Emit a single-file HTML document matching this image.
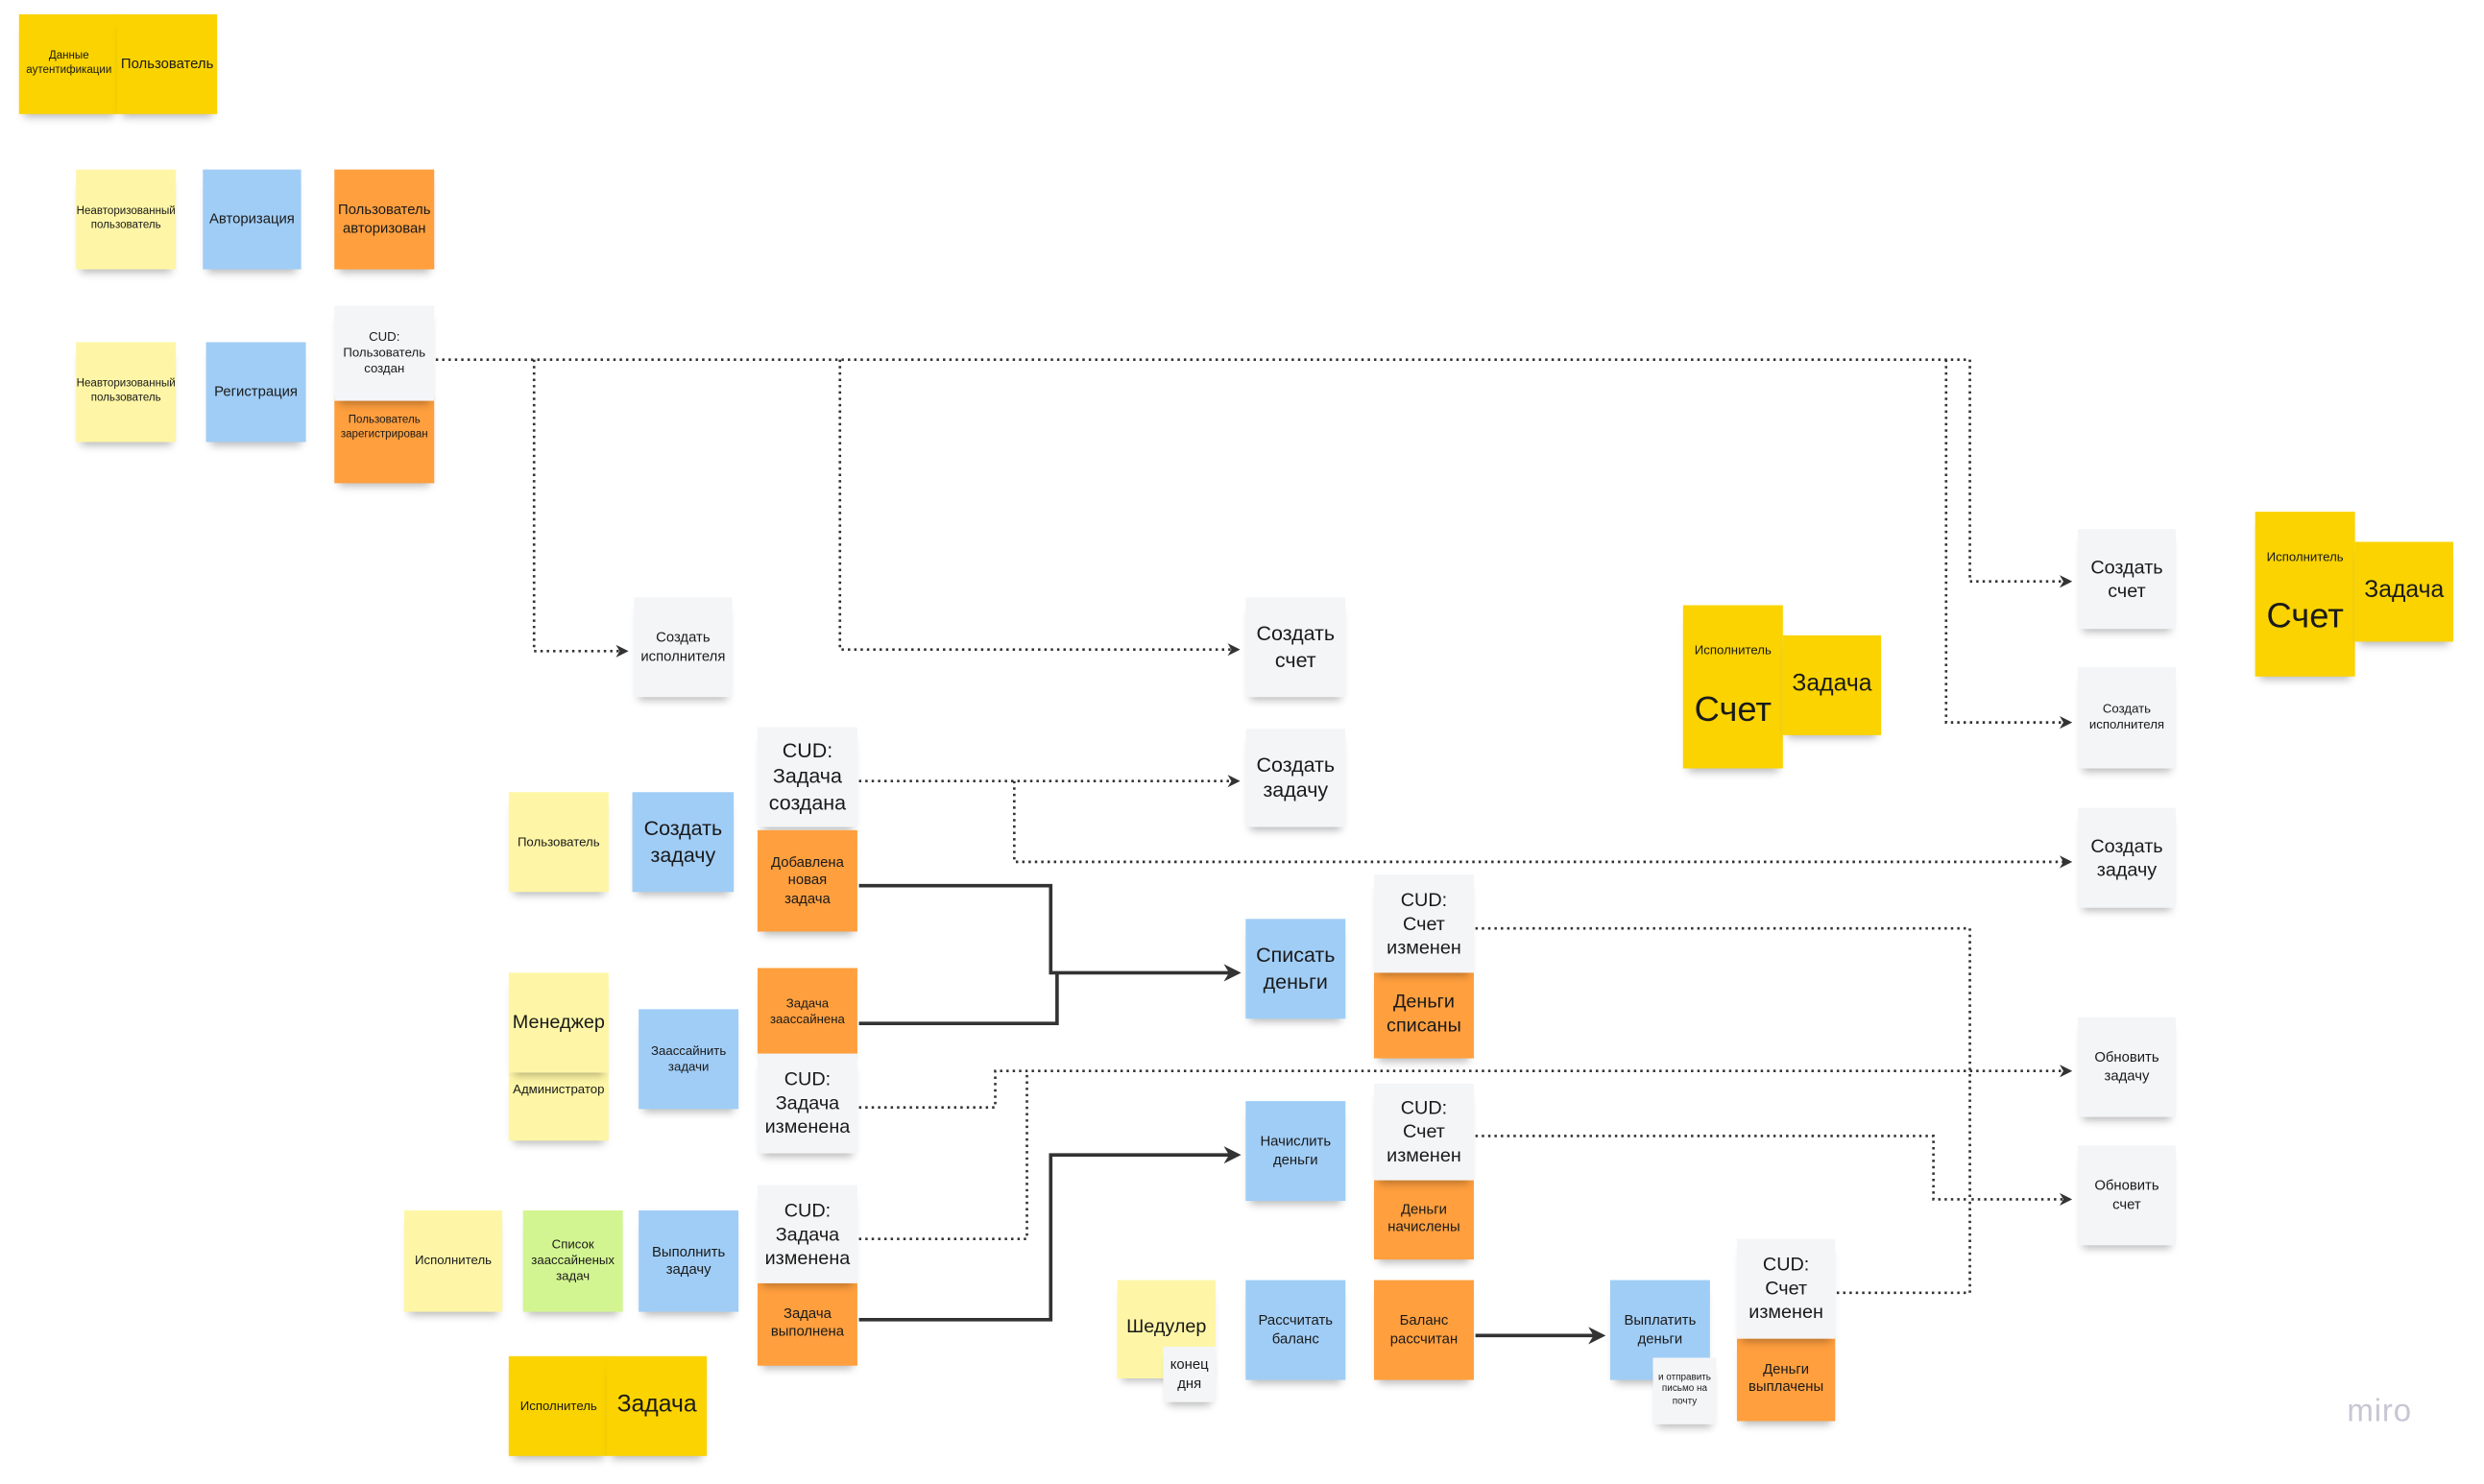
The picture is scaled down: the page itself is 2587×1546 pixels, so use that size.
<!DOCTYPE html>
<html><head><meta charset="utf-8">
<style>
html,body{margin:0;padding:0;background:#fff;overflow:hidden}
#w{position:absolute;left:0;top:0;width:1560px;height:933px;transform:scale(1.6505);transform-origin:0 0}
.s{position:absolute;display:flex;align-items:center;justify-content:center;text-align:center;
font-family:"Liberation Sans Narrow","Liberation Sans","DejaVu Sans",sans-serif;color:#1a1a1a;line-height:1.25;
box-shadow:0 5px 5px -3px rgba(0,0,0,.28);box-sizing:border-box;padding:2px 5px}
.y{background:#fad300}.ly{background:#fef6a6}.b{background:#a0cdf6}.o{background:#ff9f3e}.w{background:#f4f5f7}.g{background:#d3f591}
.f7{font-size:7px}.f8{font-size:8px}.f9{font-size:9px}.f12{font-size:12px}.f13{font-size:13px}.f15{font-size:15px}.f22{font-size:22px}
svg{position:absolute;left:0;top:0}
</style></head><body><div id="w">
<svg width="1560" height="933" viewBox="0 0 1560 933">
<defs><marker id="a" viewBox="0 0 10 10" refX="8" refY="5" markerWidth="5" markerHeight="5" orient="auto"><path d="M0 0 L10 5 L0 10 L3 5Z" fill="#333"/></marker></defs>
<g fill="none" stroke="#333" stroke-width="1.6" stroke-dasharray="1.5 2.5">
<path d="M275 227 H1243 V367 H1306" marker-end="url(#a)"/>
<path d="M337 227 V411 H395" marker-end="url(#a)"/>
<path d="M530 227 V410 H781" marker-end="url(#a)"/>
<path d="M1228 227 V456 H1306" marker-end="url(#a)"/>
<path d="M542 493 H781" marker-end="url(#a)"/>
<path d="M640 493 V544 H1306" marker-end="url(#a)"/>
<path d="M931 586 H1243 V757 H1306" marker-end="url(#a)"/>
<path d="M931 717 H1220 V757 H1243"/>
<path d="M1159 816 H1243 V757"/>
<path d="M542 699 H628 V676 H1306" marker-end="url(#a)"/>
<path d="M542 782 H648 V676"/>
</g>
<g fill="none" stroke="#333" stroke-width="2.2">
<path d="M542 559 H663 V614 H781" marker-end="url(#a)"/>
<path d="M542 646 H667 V614"/>
<path d="M542 833 H663 V729 H781" marker-end="url(#a)"/>
<path d="M931 843 H1011" marker-end="url(#a)"/>
</g>
</svg>

<div class="s y f7" style="left:12px;top:9px;width:63px;height:63px">Данные аутентификации</div>
<div class="s y f9" style="left:74px;top:9px;width:63px;height:63px">Пользователь</div>

<div class="s ly f7" style="left:48px;top:107px;width:63px;height:63px">Неавторизованный пользователь</div>
<div class="s b f9" style="left:128px;top:107px;width:62px;height:63px">Авторизация</div>
<div class="s o f9" style="left:211px;top:107px;width:63px;height:63px">Пользователь авторизован</div>

<div class="s ly f7" style="left:48px;top:216px;width:63px;height:63px">Неавторизованный пользователь</div>
<div class="s b f9" style="left:130px;top:216px;width:63px;height:63px">Регистрация</div>
<div class="s o f7" style="left:211px;top:250px;width:63px;height:55px;align-items:flex-start;padding-top:12px">Пользователь зарегистрирован</div>
<div class="s w f8" style="left:211px;top:193px;width:63px;height:60px">CUD: Пользователь создан</div>

<div class="s w f9" style="left:400px;top:377px;width:62px;height:63px">Создать исполнителя</div>
<div class="s w f13" style="left:786px;top:377px;width:63px;height:63px">Создать счет</div>
<div class="s w f13" style="left:786px;top:460px;width:63px;height:62px">Создать задачу</div>

<div class="s w f13" style="left:478px;top:459px;width:63px;height:63px">CUD: Задача создана</div>
<div class="s o f9" style="left:478px;top:524px;width:63px;height:64px;padding:2px 10px">Добавлена новая задача</div>

<div class="s ly f8" style="left:321px;top:500px;width:63px;height:63px">Пользователь</div>
<div class="s b f13" style="left:399px;top:500px;width:64px;height:63px">Создать задачу</div>

<div class="s ly f8" style="left:321px;top:677px;width:63px;height:43px;align-items:flex-start;padding-top:6px">Администратор</div>
<div class="s ly f12" style="left:321px;top:614px;width:63px;height:63px">Менеджер</div>
<div class="s b f8" style="left:403px;top:637px;width:63px;height:63px">Заассайнить задачи</div>

<div class="s o f8" style="left:478px;top:611px;width:63px;height:56px">Задача заассайнена</div>
<div class="s w f12" style="left:478px;top:665px;width:63px;height:63px">CUD: Задача изменена</div>

<div class="s ly f8" style="left:255px;top:764px;width:62px;height:64px">Исполнитель</div>
<div class="s g f8" style="left:330px;top:764px;width:63px;height:64px">Список заассайненых задач</div>
<div class="s b f9" style="left:403px;top:764px;width:63px;height:64px">Выполнить задачу</div>

<div class="s o f9" style="left:478px;top:808px;width:63px;height:54px">Задача выполнена</div>
<div class="s w f12" style="left:478px;top:748px;width:63px;height:62px">CUD: Задача изменена</div>

<div class="s y f8" style="left:321px;top:856px;width:63px;height:63px">Исполнитель</div>
<div class="s y f15" style="left:383px;top:856px;width:63px;height:63px">Задача</div>

<div class="s b f13" style="left:786px;top:580px;width:63px;height:63px">Списать деньги</div>
<div class="s o f12" style="left:867px;top:612px;width:63px;height:56px">Деньги списаны</div>
<div class="s w f12" style="left:867px;top:552px;width:63px;height:62px">CUD: Счет изменен</div>

<div class="s b f9" style="left:786px;top:695px;width:63px;height:63px">Начислить деньги</div>
<div class="s o f9" style="left:867px;top:743px;width:63px;height:52px">Деньги начислены</div>
<div class="s w f12" style="left:867px;top:684px;width:63px;height:61px">CUD: Счет изменен</div>

<div class="s ly f12" style="left:705px;top:808px;width:62px;height:62px;align-items:flex-start;padding-top:22px">Шедулер</div>
<div class="s w f9" style="left:734px;top:850px;width:33px;height:35px;padding:1px">конец дня</div>
<div class="s b f9" style="left:786px;top:808px;width:63px;height:63px">Рассчитать баланс</div>
<div class="s o f9" style="left:867px;top:808px;width:63px;height:63px">Баланс рассчитан</div>

<div class="s b f9" style="left:1016px;top:808px;width:63px;height:63px">Выплатить деньги</div>
<div class="s w" style="left:1043px;top:857px;width:40px;height:42px;font-size:6px;padding:1px">и отправить письмо на почту</div>
<div class="s o f9" style="left:1096px;top:843px;width:62px;height:54px">Деньги выплачены</div>
<div class="s w f12" style="left:1096px;top:782px;width:62px;height:63px">CUD: Счет изменен</div>

<div class="s y" style="left:1062px;top:382px;width:63px;height:103px;display:block;padding-top:24px;font-size:8px">Исполнитель<div style="font-size:22px;margin-top:18px">Счет</div></div>
<div class="s y f15" style="left:1125px;top:401px;width:62px;height:63px">Задача</div>

<div class="s w f12" style="left:1311px;top:334px;width:62px;height:63px">Создать счет</div>
<div class="s w f8" style="left:1311px;top:421px;width:62px;height:64px">Создать исполнителя</div>
<div class="s w f12" style="left:1311px;top:510px;width:62px;height:63px">Создать задачу</div>
<div class="s w f9" style="left:1311px;top:642px;width:62px;height:63px">Обновить задачу</div>
<div class="s w f9" style="left:1311px;top:723px;width:62px;height:63px">Обновить счет</div>

<div class="s y" style="left:1423px;top:323px;width:63px;height:104px;display:block;padding-top:24px;font-size:8px">Исполнитель<div style="font-size:22px;margin-top:18px">Счет</div></div>
<div class="s y f15" style="left:1486px;top:342px;width:62px;height:63px">Задача</div>

<div style="position:absolute;left:1481px;top:880px;font-family:'Liberation Sans',sans-serif;font-size:20px;color:#c7c6d3;letter-spacing:0.5px">miro</div>
</div></body></html>
